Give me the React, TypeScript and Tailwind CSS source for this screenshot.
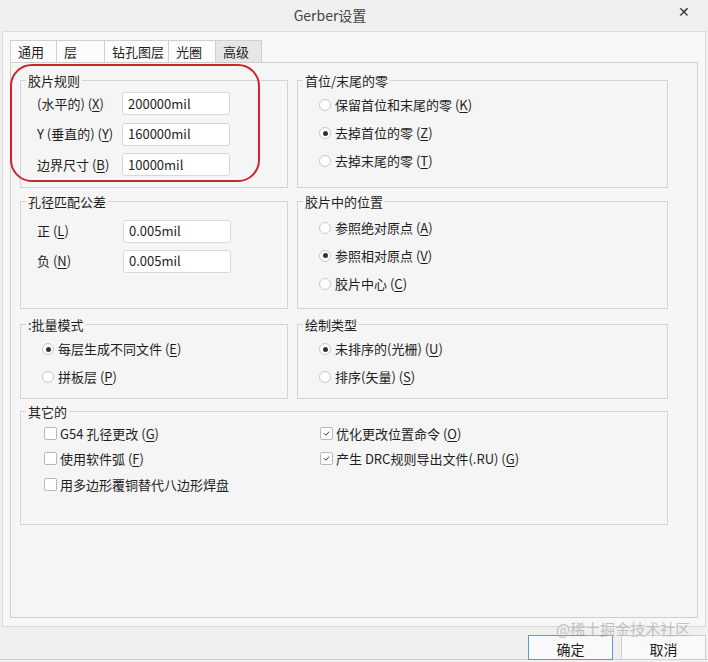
import React from 'react';

const font = "font-['Noto_Sans_CJK_SC','Noto_Sans',sans-serif]";

// 带下划线的快捷键，如 (X)
function Key({ k }: { k: string }) {
  return (
    <>
      (<u className="underline-offset-2">{k}</u>)
    </>
  );
}

function Group({
  title,
  className = '',
  bodyClass = '',
  children,
}: {
  title: string;
  className?: string;
  bodyClass?: string;
  children: React.ReactNode;
}) {
  return (
    <fieldset className={`border border-[#d4d4d4] ${className}`}>
      <legend className="ml-[5px] px-[2px] leading-[17px]">{title}</legend>
      <div className={bodyClass}>{children}</div>
    </fieldset>
  );
}

function Field({ label, value, labelW }: { label: React.ReactNode; value: string; labelW: string }) {
  return (
    <div className="flex items-center h-[23px]">
      <span className={labelW}>{label}</span>
      <div className="w-[108px] h-[23px] bg-white border border-[#d8d8d8] rounded-[3px] px-[5px] flex items-center">
        {value}
      </div>
    </div>
  );
}

function Radio({ checked, children }: { checked?: boolean; children: React.ReactNode }) {
  return (
    <div className="flex items-center h-[28px] gap-[4px]">
      <span className="w-[12px] h-[12px] rounded-full border border-[#c8c8c8] bg-white flex items-center justify-center">
        {checked && <span className="w-[5px] h-[5px] rounded-full bg-[#333]" />}
      </span>
      <span>{children}</span>
    </div>
  );
}

function Check({ checked, children }: { checked?: boolean; children: React.ReactNode }) {
  return (
    <div className="flex items-center h-[25.5px] gap-[3px]">
      <span className="w-[13px] h-[13px] rounded-[2px] border border-[#b8b8b8] bg-white flex items-center justify-center">
        {checked && (
          <svg width="9" height="9" viewBox="0 0 9 9" fill="none">
            <path d="M1.8 4.2 L3.8 6.2 L7.2 2.6" stroke="#333" strokeWidth="1" />
          </svg>
        )}
      </span>
      <span>{children}</span>
    </div>
  );
}

const tabs = [
  { name: '通用', w: 'w-[47px]' },
  { name: '层', w: 'w-[49px]' },
  { name: '钻孔图层', w: 'w-[65px]' },
  { name: '光圈', w: 'w-[48px]' },
  { name: '高级', w: 'w-[47px]', active: true },
];

export default function App() {
  return (
    <div className={`relative w-[708px] h-[662px] bg-[#f0f0f0] overflow-hidden text-[13px] text-[#1e1e1e] ${font}`}>
      {/* 标题栏 */}
      <div className="h-[31px] flex items-center">
        <div className="flex-1 text-center text-[14px] text-[#444]">Gerber设置</div>
        <div className="w-[48px] text-center text-[14px] text-[#333] -mt-[8px]">✕</div>
      </div>

      {/* 外框 */}
      <div className="mx-[2px] w-[704px] h-[596px] border border-[#dadada] bg-[#f7f7f7] px-[7px] pt-[8px]">
        {/* 选项卡 */}
        <div className="flex h-[22px]">
          {tabs.map((t) => (
            <div
              key={t.name}
              className={`${t.w} h-[22px] -mr-px border border-b-0 border-[#d0d0d0] pl-[7px] flex items-center ${
                t.active ? 'bg-[#e6e6e6]' : 'bg-[#fcfcfc]'
              }`}
            >
              {t.name}
            </div>
          ))}
        </div>

        {/* 选项卡内容 */}
        <div className="w-[688px] h-[556px] border border-[#cfcfcf] bg-[#f5f5f5] pl-[9px] pt-[8.5px]">
          <div className="grid grid-cols-[268px_371px] gap-x-[9px]">
            <Group title="胶片规则" className="h-[116px]" bodyClass="pl-[16px] flex flex-col gap-[7.5px] mt-[3.5px]">
              <Field labelW="w-[85px]" label={<>(水平的) <Key k="X" /></>} value="200000mil" />
              <Field labelW="w-[85px]" label={<>Y (垂直的) <Key k="Y" /></>} value="160000mil" />
              <Field labelW="w-[85px]" label={<>边界尺寸 <Key k="B" /></>} value="10000mil" />
            </Group>
            <Group title="首位/末尾的零" className="h-[116px]" bodyClass="pl-[21px] mt-[2.5px]">
              <Radio>保留首位和末尾的零 <Key k="K" /></Radio>
              <Radio checked>去掉首位的零 <Key k="Z" /></Radio>
              <Radio>去掉末尾的零 <Key k="T" /></Radio>
            </Group>

            <Group title="孔径匹配公差" className="h-[116px] mt-[5.5px]" bodyClass="pl-[16px] flex flex-col gap-[7px] mt-[9.5px]">
              <Field labelW="w-[86px]" label={<>正 <Key k="L" /></>} value="0.005mil" />
              <Field labelW="w-[86px]" label={<>负 <Key k="N" /></>} value="0.005mil" />
            </Group>
            <Group title="胶片中的位置" className="h-[116px] mt-[5.5px]" bodyClass="pl-[21px] mt-[3.5px]">
              <Radio>参照绝对原点 <Key k="A" /></Radio>
              <Radio checked>参照相对原点 <Key k="V" /></Radio>
              <Radio>胶片中心 <Key k="C" /></Radio>
            </Group>

            <Group title=":批量模式" className="h-[83px] mt-[6.5px]" bodyClass="pl-[21px] mt-[2.5px]">
              <Radio checked>每层生成不同文件 <Key k="E" /></Radio>
              <Radio>拼板层 <Key k="P" /></Radio>
            </Group>
            <Group title="绘制类型" className="h-[83px] mt-[6.5px]" bodyClass="pl-[21px] mt-[2.5px]">
              <Radio checked>未排序的(光栅) <Key k="U" /></Radio>
              <Radio>排序(矢量) <Key k="S" /></Radio>
            </Group>

            <Group title="其它的" className="col-span-2 h-[122px] mt-[4.5px]" bodyClass="pl-[23px] grid grid-cols-[276px_1fr] mt-[0.5px]">
              <div>
                <Check>G54 孔径更改 <Key k="G" /></Check>
                <Check>使用软件弧 <Key k="F" /></Check>
                <Check>用多边形覆铜替代八边形焊盘</Check>
              </div>
              <div>
                <Check checked>优化更改位置命令 <Key k="O" /></Check>
                <Check checked>产生 DRC规则导出文件(.RU) <Key k="G" /></Check>
              </div>
            </Group>
          </div>
        </div>
      </div>

      {/* 底部按钮 */}
      <div className="h-[33px] border-b border-[#d2d2d2] flex justify-end items-start pt-[8px] pr-[2px] gap-[8px]">
        <button className="w-[85px] h-[25px] bg-[#f9f9f9] border border-[#5b9bd5] text-[14px] pt-[3px]">确定</button>
        <button className="w-[85px] h-[25px] bg-[#f9f9f9] border border-[#cfcfcf] text-[14px] pt-[3px]">取消</button>
      </div>

      {/* 红色标注框 */}
      <div className="absolute left-[10px] top-[64px] w-[250px] h-[118px] border-[2.5px] border-[#c8262c] rounded-[22px] pointer-events-none" />

      {/* 水印 */}
      <div className="absolute left-[556px] top-[620px] text-[15px] leading-[18px] text-[#b5b5b5] opacity-80 pointer-events-none">
        @稀土掘金技术社区
      </div>
    </div>
  );
}
